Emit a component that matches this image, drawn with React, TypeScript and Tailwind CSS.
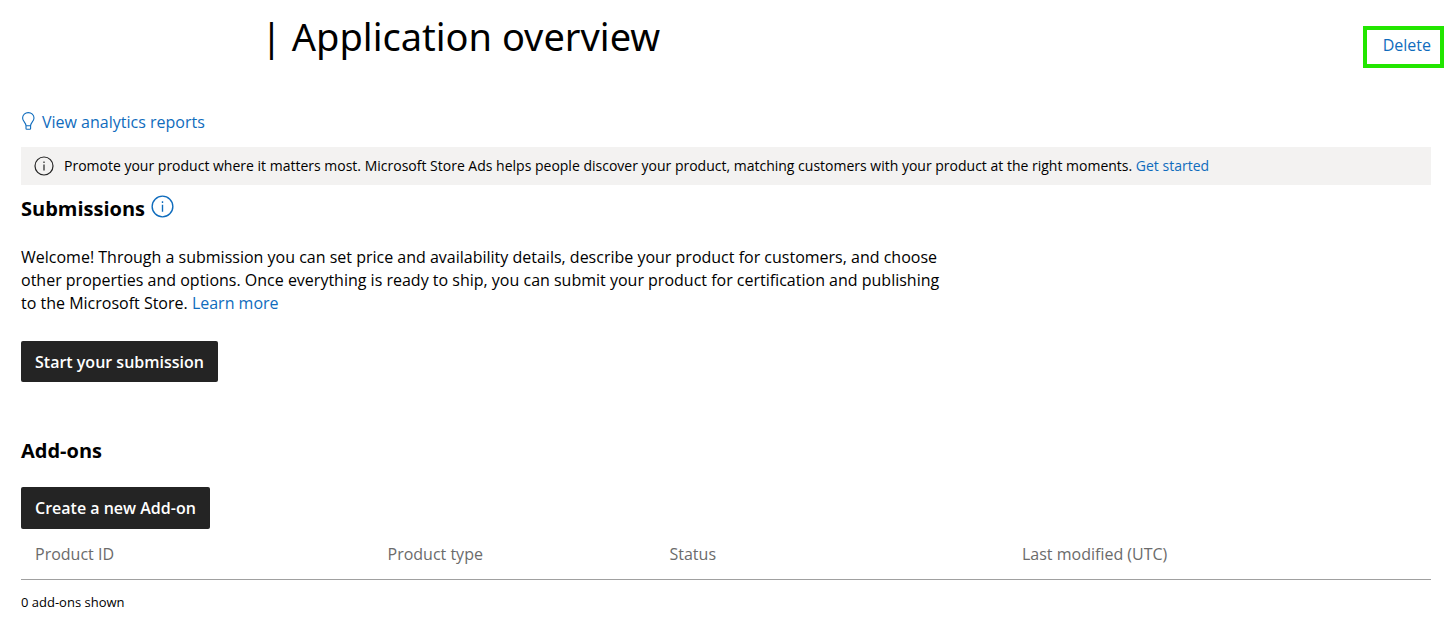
const link = "text-[#0f6cbd]";

function Bulb() {
  return (
    <svg className="-translate-y-px" width="14" height="18" viewBox="0 0 14 18" fill="none" stroke="#0f6cbd" strokeWidth="1.1" aria-hidden="true">
      <path d="M5 13.7C4.8 10.2 1.6 9.4 1.6 6A5.7 5.4 0 0 1 13 6C13 9.4 9.8 10.2 9.6 13.7V16.5Q9.6 17.2 8.9 17.2H5.7Q5 17.2 5 16.5ZM5 13.7H9.6" />
    </svg>
  );
}

function Info({ color }: { color: string }) {
  return (
    <svg className="h-full w-full" viewBox="0 0 20 20" fill="none" stroke={color} strokeWidth="1.2" aria-hidden="true">
      <circle cx="10" cy="10" r="9" />
      <path d="M10 8.5V14.5M10 5.5V7" />
    </svg>
  );
}

export default function App() {
  return (
    <main className="pt-3 pr-5 pl-[21px] font-['Open_Sans','Noto_Sans',sans-serif] text-black">
      <header className="flex items-start justify-between">
        <h1 className="pl-60 font-['Noto_Sans',sans-serif] text-[38px] leading-[48px]">| Application overview</h1>
        <button className={"mt-[14px] -mr-[13px] flex h-[42px] items-center border-4 border-[#22e600] pr-[9px] pb-1 pl-4 text-base " + link}>Delete</button>
      </header>
      <a href="#reports" className={"mt-[42px] flex w-fit items-center gap-[7px] text-base leading-6 " + link}>
        <Bulb />View analytics reports
      </a>
      <div className="mt-[13px] flex min-h-[38px] items-center gap-[10px] bg-[#f3f2f1] px-[13px] text-[14px] leading-5">
        <span className="h-5 w-5 shrink-0"><Info color="#242424" /></span>
        <p>Promote your product where it matters most. Microsoft Store Ads helps people discover your product, matching customers with your product at the right moments. <a href="#ads" className={link}>Get started</a></p>
      </div>
      <div className="mt-2 flex items-start gap-[6px]">
        <h2 className="text-[20px] leading-8 font-bold">Submissions</h2>
        <button aria-label="About submissions" className="mt-[2px] h-[23px] w-[23px]"><Info color="#0f6cbd" /></button>
      </div>
      <p className="mt-[21px] max-w-[930px] text-base leading-[23px]">
        Welcome! Through a submission you can set price and availability details, describe your product for customers, and choose
        other properties and options. Once everything is ready to ship, you can submit your product for certification and publishing
        to the Microsoft Store. <a href="#learn" className={link}>Learn more</a>
      </p>
      <button className="mt-[26px] block h-[41px] rounded-xs bg-[#242424] px-[14px] text-base font-semibold text-white">Start your submission</button>
      <h2 className="mt-[53px] text-[20px] leading-8 font-bold">Add-ons</h2>
      <button className="mt-5 block h-[42px] rounded-xs bg-[#242424] px-[14px] text-base font-semibold text-white">Create a new Add-on</button>
      <table className="w-full table-fixed border-b border-[#a0a0a0] text-left text-base text-[#6b6b6b]">
        <thead>
          <tr className="h-[50px]">
            <th className="w-1/4 px-[14px] font-normal">Product ID</th>
            <th className="w-1/5 px-[14px] font-normal">Product type</th>
            <th className="w-1/4 px-[14px] font-normal">Status</th>
            <th className="px-[14px] font-normal">Last modified (UTC)</th>
          </tr>
        </thead>
      </table>
      <p className="mt-3 text-[13px] leading-5">0 add-ons shown</p>
    </main>
  );
}
